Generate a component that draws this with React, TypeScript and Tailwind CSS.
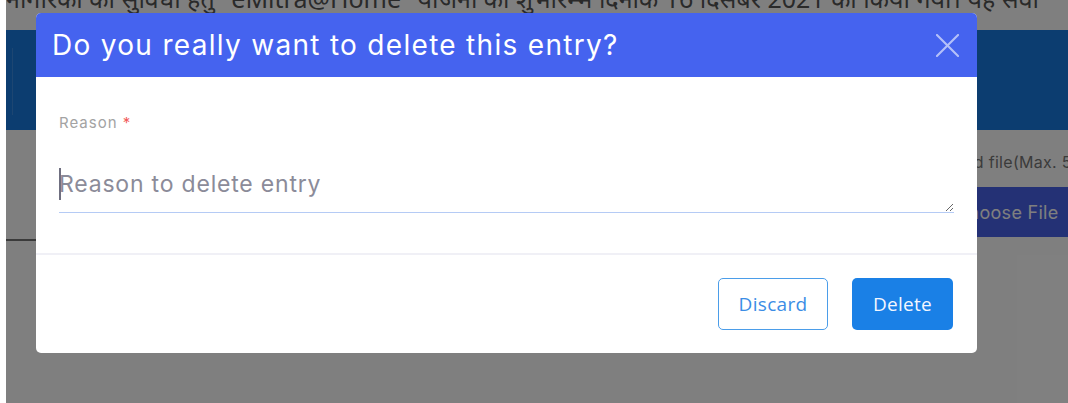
import React from "react";

const sans = "font-['Inter','Noto_Sans',sans-serif]";

const CloseIcon = () => (
	<svg width="23" height="23" viewBox="0 0 24 24" fill="none">
		<path
			d="M1 1L23 23M23 1L1 23"
			stroke="currentColor"
			strokeWidth="2.2"
			strokeLinecap="round"
		/>
	</svg>
);

// Form page that sits behind the modal backdrop
const BackgroundPage = () => (
	<div className="flex flex-col h-full">
		<div className="h-[30px] overflow-hidden">
			<p className="-mt-[14px] whitespace-nowrap text-[25px] leading-none text-[#555] font-['Noto_Sans','DejaVu_Sans',sans-serif]">
				नागरिकों को सुविधा हेतु "eMitra@Home" योजना का शुभारम्भ दिनांक 16 दिसंबर 2021 को किया गया। यह सेवा
			</p>
		</div>
		<div className="h-[100px] bg-[#187ae0] pl-[6px] pt-[18px]">
			<div className="w-px h-[67px] bg-white/15" />
		</div>
		<div className="flex">
			<div className="flex-1 h-[111px] border-b-2 border-[#757575]" />
			<div className="w-[150px] pt-[20px] pl-[10px]">
				<p className={`whitespace-nowrap text-[16px] tracking-[0.3px] text-[#777] ${sans}`}>
					Upload file(Max. 5MB)
				</p>
				<div className="mt-[13px] h-[50px] w-[160px] bg-[#4862ea] flex items-center pl-[27px] text-[18px] tracking-[0.3px] text-white font-['Inter',sans-serif]">
					Choose File
				</div>
			</div>
		</div>
	</div>
);

const DeleteEntryModal = () => (
	<div className="w-[941px] rounded-[5px] bg-white overflow-hidden">
		<div className="h-[64px] bg-[#4563ef] flex items-center justify-between pl-[16px] pr-[18px]">
			<h2 className={`text-[28px] tracking-[1.3px] text-white font-normal ${sans}`}>
				Do you really want to delete this entry?
			</h2>
			<button className="text-white/60">
				<CloseIcon />
			</button>
		</div>

		<div className="px-[23px] pt-[36px] pb-[40px]">
			<label className={`block text-[15px] tracking-[1px] leading-[20px] text-[#a3a3a3] ${sans}`}>
				Reason <span className="text-[#f25c5c]">*</span>
			</label>
			<div className="relative mt-[25px]">
				<textarea
					placeholder="Reason to delete entry"
					className={`block w-full h-[55px] pt-[10px] text-[23px] tracking-[0.8px] leading-[32px] bg-transparent border-0 border-b border-solid border-b-[#b5cbf5] outline-none resize-y placeholder:text-[#8b8b99] ${sans}`}
				/>
				<span className="absolute left-0 top-[10px] w-[2px] h-[32px] bg-[#6f6f80]" />
			</div>
		</div>

		<div className="border-t-2 border-[#f0f0f6] flex justify-end gap-[24px] px-[24px] pt-[23px] pb-[23px]">
			<button className="w-[110px] h-[52px] rounded-[5px] border border-[#4b9de9] text-[#3b8de5] text-[19px] tracking-[0.3px] font-['Open_Sans',sans-serif]">
				Discard
			</button>
			<button className="w-[101px] h-[52px] rounded-[5px] bg-[#1a80e6] text-[#f3f6ff] text-[19px] tracking-[0.3px] font-['Open_Sans',sans-serif]">
				Delete
			</button>
		</div>
	</div>
);

export default function App() {
	return (
		<div className="w-full h-[403px] bg-white overflow-hidden pl-[6px]">
			<div className="relative h-full">
				<BackgroundPage />
				<div className="absolute inset-0 bg-black/50 pt-[13px] pl-[30px]">
					<DeleteEntryModal />
				</div>
			</div>
		</div>
	);
}
